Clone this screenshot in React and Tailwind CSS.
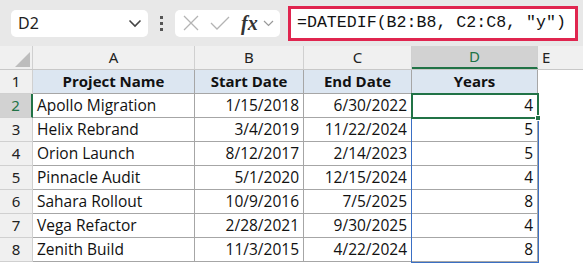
import React from "react";

const rows = [
  ["Apollo Migration", "1/15/2018", "6/30/2022", "4"],
  ["Helix Rebrand", "3/4/2019", "11/22/2024", "5"],
  ["Orion Launch", "8/12/2017", "2/14/2023", "5"],
  ["Pinnacle Audit", "5/1/2020", "12/15/2024", "4"],
  ["Sahara Rollout", "10/9/2016", "7/5/2025", "8"],
  ["Vega Refactor", "2/28/2021", "9/30/2025", "4"],
  ["Zenith Build", "11/3/2015", "4/22/2024", "8"],
];

const cellFont = { fontFamily: '"Open Sans", "Noto Sans", sans-serif' };

export default function App() {
  return (
    <div className="w-[583px] h-[264px] bg-white overflow-hidden relative" style={{ fontFamily: '"Noto Sans", "Open Sans", sans-serif' }}>
      {/* Toolbar */}
      <div className="h-[46px] bg-[#e8e8e8] flex items-center">
        <div className="ml-[11px] w-[137px] h-[27px] bg-white rounded-[5px] flex items-center justify-between pl-[7px] pr-[6px]">
          <span className="text-[16px] text-[#222] leading-none">D2</span>
          <svg width="14" height="9" viewBox="0 0 14 9" fill="none" stroke="#444" strokeWidth="1.6"><path d="M1.5 1.5 L7 7 L12.5 1.5" /></svg>
        </div>
        <div className="w-[27px] flex flex-col items-center gap-[3px]">
          <div className="w-[3px] h-[3px] bg-[#555]" />
          <div className="w-[3px] h-[3px] bg-[#555]" />
          <div className="w-[3px] h-[3px] bg-[#555]" />
        </div>
        <div className="w-[105px] h-[27px] bg-white rounded-[5px] flex items-center pl-[8px]">
          <svg width="16" height="16" viewBox="0 0 16 16" stroke="#b4b4b4" strokeWidth="1.3" fill="none"><path d="M1 1 L15 15 M15 1 L1 15" /></svg>
          <svg className="ml-[11px]" width="20" height="14" viewBox="0 0 20 14" stroke="#b4b4b4" strokeWidth="1.3" fill="none"><path d="M1 7 L7 13 L19 1" /></svg>
          <span className="ml-[11px] text-[20px] italic font-bold text-[#333] leading-none" style={{ fontFamily: '"Liberation Serif", serif' }}>fx</span>
          <svg className="ml-[5px]" width="11" height="7" viewBox="0 0 11 7" fill="none" stroke="#999" strokeWidth="1.2"><path d="M1 1 L5.5 5.5 L10 1" /></svg>
        </div>
        <div className="ml-[8px] w-[290px] h-[35px] border-[3px] border-[#e0254f] bg-white flex items-center pl-[6px]">
          <span className="text-[16.6px] text-[#111] leading-none whitespace-pre" style={{ fontFamily: '"Liberation Mono", "DejaVu Sans Mono", monospace' }}>=DATEDIF(B2:B8, C2:C8, "y")</span>
        </div>
      </div>

      {/* Column headers */}
      <div className="flex h-[24px] bg-[#f0f0f0] border-b border-[#c8c8c8] text-[15px] text-[#222]">
        <div className="w-[33px] border-r border-[#d0d0d0] relative">
          <div className="absolute right-[2px] bottom-[2px] w-0 h-0 border-l-[15px] border-l-transparent border-b-[15px] border-b-[#bdbdbd]" />
        </div>
        <div className="w-[162px] border-r border-[#d0d0d0] flex items-center justify-center">A</div>
        <div className="w-[109px] border-r border-[#d0d0d0] flex items-center justify-center">B</div>
        <div className="w-[108px] border-r border-[#d0d0d0] flex items-center justify-center">C</div>
        <div className="w-[126px] bg-[#d2d2d2] border-b-2 border-[#217346] border-r border-r-[#d0d0d0] flex items-center justify-center text-[#217346]">D</div>
        <div className="flex-1 flex items-center pl-[4px]">E</div>
      </div>

      {/* Header row 1 */}
      <div className="flex h-[24px] text-[15px] text-[#111]" style={cellFont}>
        <div className="w-[33px] bg-[#f0f0f0] border-r border-b border-[#d0d0d0] flex items-center justify-center text-[#222]" style={{ fontFamily: '"Noto Sans", sans-serif' }}>1</div>
        <div className="w-[162px] bg-[#dce6f1] border-r border-b border-[#a6a6a6] flex items-center justify-center font-bold">Project Name</div>
        <div className="w-[109px] bg-[#dce6f1] border-r border-b border-[#a6a6a6] flex items-center justify-center font-bold">Start Date</div>
        <div className="w-[108px] bg-[#dce6f1] border-r border-b border-[#a6a6a6] flex items-center justify-center font-bold">End Date</div>
        <div className="w-[126px] bg-[#dce6f1] border-r border-b border-[#a6a6a6] flex items-center justify-center font-bold">Years</div>
        <div className="flex-1" />
      </div>

      {rows.map((r, i) => (
        <div key={i} className="flex h-[24px] text-[15.5px] text-[#111]" style={cellFont}>
          <div
            className={
              i === 0
                ? "w-[33px] text-[15px] bg-[#d2d2d2] border-r-2 border-r-[#217346] border-b border-b-[#d0d0d0] flex items-center justify-center text-[#217346]"
                : "w-[33px] text-[15px] bg-[#f0f0f0] border-r border-b border-[#d0d0d0] flex items-center justify-center text-[#222]"
            }
            style={{ fontFamily: '"Noto Sans", sans-serif' }}
          >
            {i + 2}
          </div>
          <div className="w-[162px] border-r border-b border-[#a6a6a6] flex items-center pl-[4px]">{r[0]}</div>
          <div className="w-[109px] border-r border-b border-[#a6a6a6] flex items-center justify-end pr-[4px]">{r[1]}</div>
          <div className="w-[108px] border-r border-b border-[#a6a6a6] flex items-center justify-end pr-[4px]">{r[2]}</div>
          <div className="w-[126px] border-r border-b border-[#a6a6a6] flex items-center justify-end pr-[4px]">{r[3]}</div>
          <div className="flex-1" />
        </div>
      ))}

      {/* Range highlight D2:D8 */}
      <div className="absolute left-[411px] top-[93px] w-[128px] h-[170px] border border-[#3a6fc4] pointer-events-none" />
      {/* Active cell D2 */}
      <div className="absolute left-[411px] top-[93px] w-[128px] h-[26px] border-2 border-[#217346] pointer-events-none">
        <div className="absolute right-[-4px] bottom-[-4px] w-[6px] h-[6px] bg-[#217346] border border-white" />
      </div>
    </div>
  );
}
